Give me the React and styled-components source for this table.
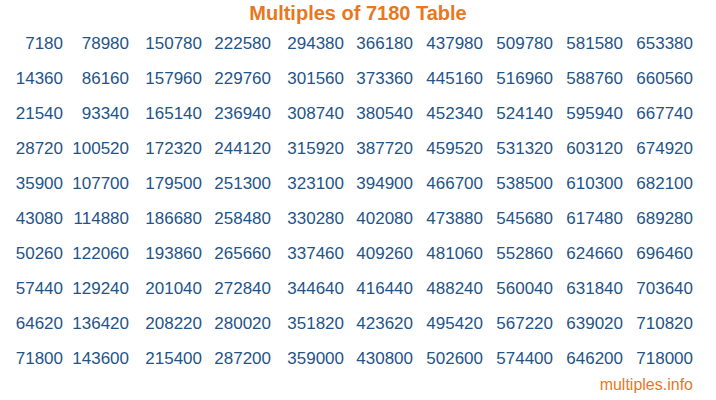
import React from "react";
import styled, { createGlobalStyle } from "styled-components";

const Global = createGlobalStyle`
  html, body { margin: 0; padding: 0; background: #ffffff; }
  body { font-family: "Liberation Sans", Arial, sans-serif; }
`;

const Page = styled.div`
  width: 716px;
  height: 400px;
  display: flex;
  flex-direction: column;
  overflow: hidden;
`;

const Title = styled.h1`
  margin: 0;
  height: 26px;
  line-height: 26px;
  font-size: 20px;
  font-weight: bold;
  text-align: center;
  color: #e8771f;
`;

const Grid = styled.div`
  display: grid;
  grid-template-columns: 63px 66px 73px 69px 73px 69px 70px 70px 70px 70px;
  grid-auto-rows: 35px;
`;

const Cell = styled.div`
  font-size: 17px;
  line-height: 35px;
  text-align: right;
  color: #1f5488;
  white-space: nowrap;
`;

const Footer = styled.div`
  height: 18px;
  line-height: 18px;
  font-size: 16px;
  text-align: right;
  padding-right: 23px;
  color: #e8771f;
`;

const BASE = 7180;

export default function App() {
  const cells = [];
  for (let r = 0; r < 10; r++) {
    for (let c = 0; c < 10; c++) {
      const n = (c * 10 + r + 1) * BASE;
      cells.push(<Cell key={`${r}-${c}`}>{n}</Cell>);
    }
  }
  return (
    <Page>
      <Global />
      <Title>Multiples of 7180 Table</Title>
      <Grid>{cells}</Grid>
      <Footer>multiples.info</Footer>
    </Page>
  );
}
